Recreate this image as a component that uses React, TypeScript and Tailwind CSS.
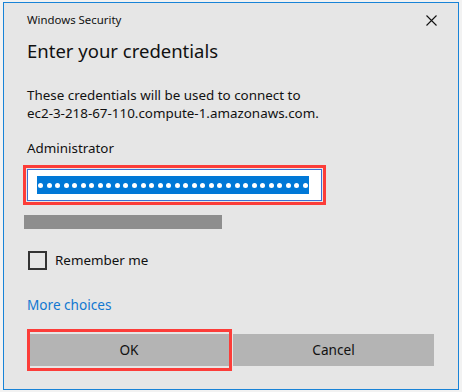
import React from "react";

const font = { fontFamily: '"Noto Sans", "Open Sans", sans-serif' };

export default function App() {
    const dots = Array.from({ length: 32 });

    return (
        <div className="w-[462px] h-[392px] bg-[#f2f2f2] pt-[2px] pl-[3px]" style={font}>
            <div className="w-[456px] h-[388px] border border-[#1883d7] bg-[#e6e6e6] px-[23px] text-[#111]">
                {/* title bar */}
                <div className="flex h-[34px] items-center justify-between text-[11.4px] leading-[34px]">
                    <span>Windows Security</span>
                    <svg width="11" height="11" viewBox="0 0 11 11" className="mr-[-2px]">
                        <path d="M0.5 0.5 L10.5 10.5 M10.5 0.5 L0.5 10.5" stroke="#111" strokeWidth="1.1" />
                    </svg>
                </div>

                <h1 className="text-[18.5px] leading-[28px] font-normal">Enter your credentials</h1>

                <p className="mt-[21px] text-[13.4px] leading-[18px]">
                    These credentials will be used to connect to
                    <br />
                    ec2-3-218-67-110.compute-1.amazonaws.com.
                </p>

                <div className="mt-[17px] text-[13.4px] leading-[18px]">Administrator</div>

                <div className="relative mt-[12px] w-[295px]">
                    <div className="flex h-[32px] items-center border border-[#3d6fd4] bg-white pl-[9px]">
                        <div className="flex h-[18px] w-[272px] items-center gap-[3.55px] bg-[#0078d7] px-[1px]">
                            {dots.map((_, i) => (
                                <span key={i} className="block h-[5px] w-[5px] rounded-full bg-white" />
                            ))}
                        </div>
                    </div>
                    <div className="pointer-events-none absolute -top-[4px] -bottom-[4px] -left-[4px] -right-[4px] border-[3px] border-[#fc3d39]" />
                </div>

                <div className="mt-[14px] -ml-[3px] h-[14px] w-[198px] bg-[#8e8e8e]" />

                <label className="mt-[21px] flex items-center gap-[8px] text-[13.4px] leading-[20px]">
                    <span className="ml-[1px] block h-[19px] w-[19px] border-2 border-[#333] bg-transparent" />
                    <span>Remember me</span>
                </label>

                <div className="mt-[26px] text-[13.6px] leading-[18px] text-[#1278d1]">More choices</div>

                <div className="mt-[20px] ml-[1px] flex gap-[3px] text-[13.6px]">
                    <div className="relative">
                        <button type="button" className="h-[32px] w-[202px] bg-[#b4b4b4]">OK</button>
                        <div className="pointer-events-none absolute -top-[5px] -bottom-[5px] -left-[1px] -right-[2px] border-[3px] border-[#fc3d39]" />
                    </div>
                    <button type="button" className="h-[32px] w-[201px] bg-[#b4b4b4]">Cancel</button>
                </div>
            </div>
        </div>
    );
}
